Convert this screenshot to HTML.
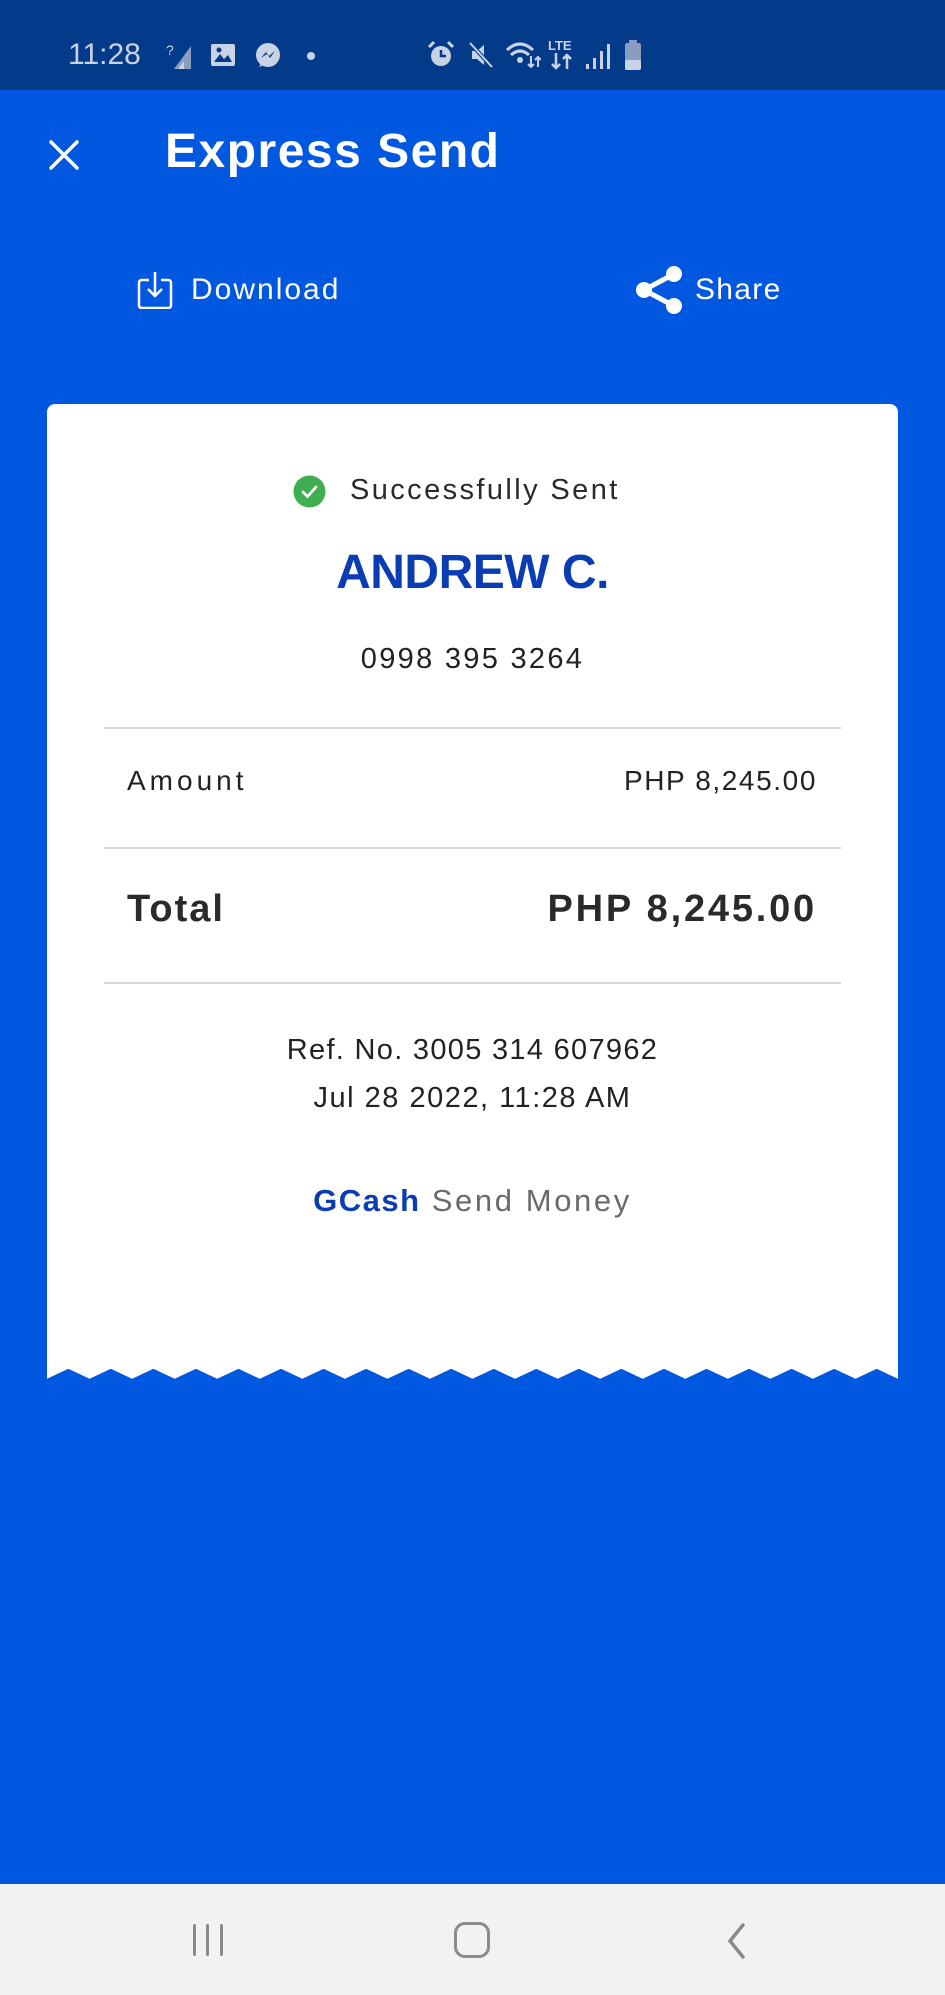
<!DOCTYPE html>
<html><head><meta charset="utf-8">
<style>
*{margin:0;padding:0;box-sizing:border-box}
html,body{width:945px;height:1995px;overflow:hidden;background:#0058e0;font-family:"Liberation Sans",sans-serif}
.abs{position:absolute}
#status{left:0;top:0;width:945px;height:90px;background:#043a8a}
#nav{left:0;top:1884px;width:945px;height:111px;background:#f2f2f2}
.t{position:absolute;white-space:nowrap}
.c{left:0;width:945px;text-align:center}
.line{position:absolute;left:104px;width:737px;height:2px;background:#d7d7d7}
</style></head><body>
<div id="status" class="abs">
  <div class="t" style="left:68px;top:38px;font-size:30px;color:#c9d3e6">11:28</div>
  <svg class="abs" style="left:166px;top:42px" width="30" height="28" viewBox="0 0 30 28">
    <text x="0" y="13" font-size="14" fill="#c9d3e6" font-family="Liberation Sans">?</text>
    <path d="M8 27 L25 4 L25 27Z" fill="#8a9cc0"/><path d="M12 27 L18 19 L18 27Z" fill="#c9d3e6"/>
  </svg>
  <svg class="abs" style="left:210px;top:43px" width="26" height="24" viewBox="0 0 26 24"><rect x="1" y="1" width="24" height="22" rx="2" fill="#c9d3e6"/><path d="M4 19 L10 11 L14 16 L18 12 L22 19Z" fill="#043a8a"/><circle cx="9" cy="7" r="2.5" fill="#043a8a"/></svg>
  <svg class="abs" style="left:254px;top:42px" width="28" height="28" viewBox="0 0 28 28"><circle cx="14" cy="13" r="12" fill="#c9d3e6"/><path d="M5 25 L8 19 L12 22Z" fill="#c9d3e6"/><path d="M7 16 L12 10 L15 14 L21 9 L16 16 L13 12Z" fill="#043a8a"/></svg>
  <div class="abs" style="left:307px;top:52px;width:8px;height:8px;border-radius:4px;background:#c9d3e6"></div>
  <svg class="abs" style="left:426px;top:40px" width="30" height="30" viewBox="0 0 30 30"><circle cx="15" cy="16" r="10" fill="#c9d3e6"/><path d="M15 10 V16 H20" stroke="#043a8a" stroke-width="2.5" fill="none"/><path d="M3 7 L8 2 M27 7 L22 2" stroke="#c9d3e6" stroke-width="3"/></svg>
  <svg class="abs" style="left:466px;top:40px" width="30" height="30" viewBox="0 0 30 30"><path d="M6 11 H11 L18 5 V25 L11 19 H6Z" fill="#c9d3e6"/><path d="M4 3 L26 27" stroke="#043a8a" stroke-width="4"/><path d="M4 3 L26 27" stroke="#c9d3e6" stroke-width="2"/></svg>
  <svg class="abs" style="left:505px;top:40px" width="36" height="30" viewBox="0 0 36 30"><path d="M2 10 Q15 -2 28 10" stroke="#c9d3e6" stroke-width="3" fill="none"/><path d="M6 15 Q15 7 24 15" stroke="#c9d3e6" stroke-width="3" fill="none"/><circle cx="15" cy="20" r="3" fill="#c9d3e6"/><path d="M26 16 V27 M23 24 L26 27 L29 24 M33 27 V17 M30 20 L33 17 L36 20" stroke="#c9d3e6" stroke-width="2" fill="none"/></svg>
  <div class="t" style="left:548px;top:38px;font-size:13px;font-weight:bold;color:#c9d3e6">LTE</div>
  <svg class="abs" style="left:550px;top:53px" width="24" height="17" viewBox="0 0 24 17"><path d="M6 0 V15 M2 11 L6 15 L10 11 M17 16 V2 M13 6 L17 2 L21 6" stroke="#c9d3e6" stroke-width="2.5" fill="none"/></svg>
  <svg class="abs" style="left:584px;top:42px" width="28" height="28" viewBox="0 0 28 28"><rect x="2" y="22" width="3" height="5" fill="#c9d3e6"/><rect x="9" y="16" width="3" height="11" fill="#c9d3e6"/><rect x="16" y="9" width="3" height="18" fill="#c9d3e6"/><rect x="23" y="2" width="3" height="25" fill="#c9d3e6"/></svg>
  <svg class="abs" style="left:624px;top:40px" width="18" height="30" viewBox="0 0 18 30"><rect x="5" y="0" width="8" height="4" fill="#8a9cc0"/><rect x="1" y="3" width="16" height="27" rx="2" fill="#8a9cc0"/><rect x="1" y="20" width="16" height="10" rx="2" fill="#c9d3e6"/></svg>
</div>

<svg class="abs" style="left:48px;top:139px" width="32" height="32" viewBox="0 0 32 32"><path d="M3 3 L29 29 M29 3 L3 29" stroke="#fff" stroke-width="3.5" stroke-linecap="round"/></svg>
<div class="t" style="left:165px;top:124px;font-size:48px;font-weight:bold;color:#fff;letter-spacing:1.5px">Express Send</div>

<svg class="abs" style="left:137px;top:271px" width="36" height="38" viewBox="0 0 36 38"><path d="M12 9 H5 Q2 9 2 12 V34 Q2 37 5 37 H31 Q34 37 34 34 V12 Q34 9 31 9 H24" stroke="#fff" stroke-width="2.5" fill="none"/><path d="M18 1 V25 M11 18 L18 25 L25 18" stroke="#fff" stroke-width="2.5" fill="none"/></svg>
<div class="t" style="left:191px;top:273px;font-size:30px;color:#fff;letter-spacing:2px">Download</div>
<svg class="abs" style="left:634px;top:265px" width="50" height="50" viewBox="0 0 50 50"><circle cx="40" cy="9" r="8" fill="#fff"/><circle cx="10" cy="25" r="8" fill="#fff"/><circle cx="40" cy="41" r="8" fill="#fff"/><path d="M40 9 L10 25 L40 41" stroke="#fff" stroke-width="5" fill="none"/></svg>
<div class="t" style="left:695px;top:273px;font-size:30px;color:#fff;letter-spacing:1.3px">Share</div>

<div class="abs" style="left:47px;top:404px;width:851px;height:961px;background:#fff;border-radius:8px 8px 0 0"></div>
<svg class="abs" style="left:47px;top:1364px" width="851" height="18" viewBox="0 0 851 18">
<path fill="#fff" stroke="#fff" stroke-width="1.5" stroke-linejoin="round" d="M0 0 V14 L21.3 4 L42.6 14 L63.8 4 L85.1 14 L106.4 4 L127.7 14 L148.9 4 L170.2 14 L191.5 4 L212.8 14 L234 4 L255.3 14 L276.6 4 L297.9 14 L319.1 4 L340.4 14 L361.7 4 L383 14 L404.2 4 L425.5 14 L446.8 4 L468.1 14 L489.3 4 L510.6 14 L531.9 4 L553.2 14 L574.4 4 L595.7 14 L617 4 L638.3 14 L659.5 4 L680.8 14 L702.1 4 L723.4 14 L744.6 4 L765.9 14 L787.2 4 L808.5 14 L829.7 4 L851 14 V0 Z"/>
</svg>

<svg class="abs" style="left:293px;top:475px" width="33" height="33" viewBox="0 0 33 33"><circle cx="16.5" cy="16.5" r="16" fill="#3fae4f"/><path d="M10 17 L14.5 21.5 L23 12" stroke="#fff" stroke-width="2.8" fill="none" stroke-linecap="round"/></svg>
<div class="t" style="left:350px;top:474px;font-size:29px;color:#2a2a2a;letter-spacing:2.4px">Successfully Sent</div>
<div class="t c" style="top:545px;font-size:48px;font-weight:bold;color:#0a3cb4;letter-spacing:-0.5px">ANDREW C.</div>
<div class="t c" style="top:643px;font-size:29px;color:#222;letter-spacing:2.3px">0998 395 3264</div>
<div class="line" style="top:727px"></div>
<div class="t" style="left:127px;top:765px;font-size:28px;color:#222;letter-spacing:4px">Amount</div>
<div class="t" style="right:128px;top:765px;font-size:28px;color:#222;letter-spacing:1.6px">PHP 8,245.00</div>
<div class="line" style="top:847px"></div>
<div class="t" style="left:127px;top:888px;font-size:38px;font-weight:bold;color:#2a2a2a;letter-spacing:2px">Total</div>
<div class="t" style="right:128px;top:888px;font-size:38px;font-weight:bold;color:#2a2a2a;letter-spacing:2.8px">PHP 8,245.00</div>
<div class="line" style="top:982px"></div>
<div class="t c" style="top:1034px;font-size:29px;color:#222;letter-spacing:1.3px">Ref. No. 3005 314 607962</div>
<div class="t c" style="top:1082px;font-size:29px;color:#222;letter-spacing:1.5px">Jul 28 2022, 11:28 AM</div>
<div class="t c" style="top:1183px;font-size:31px;color:#6a6a6a;letter-spacing:2.6px"><b style="color:#0a3cb4;letter-spacing:1.5px">GCash</b> Send Money</div>

<div id="nav" class="abs">
  <div class="abs" style="left:193px;top:40px;width:3px;height:32px;background:#8a8a8a;border-radius:2px"></div>
  <div class="abs" style="left:206px;top:40px;width:3px;height:32px;background:#8a8a8a;border-radius:2px"></div>
  <div class="abs" style="left:220px;top:40px;width:3px;height:32px;background:#8a8a8a;border-radius:2px"></div>
  <div class="abs" style="left:454px;top:38px;width:36px;height:36px;border:3.5px solid #8a8a8a;border-radius:11px"></div>
  <svg class="abs" style="left:724px;top:38px" width="24" height="38" viewBox="0 0 24 38"><path d="M19 3 L6 19 L19 35" stroke="#8a8a8a" stroke-width="3.5" fill="none" stroke-linecap="round"/></svg>
</div>
</body></html>
